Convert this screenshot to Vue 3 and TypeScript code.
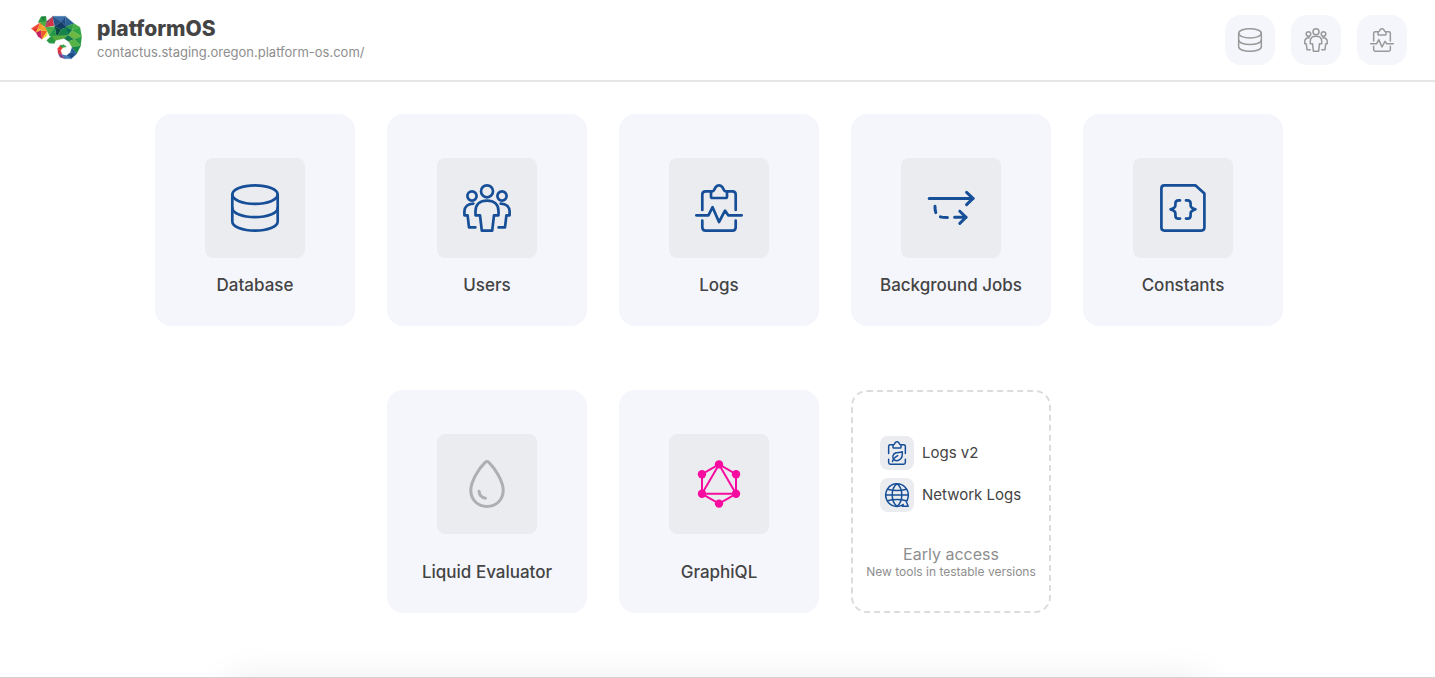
<script setup lang="ts">
interface Shape {
  d: string
}

interface Tool {
  id: string
  label: string
  tone: 'blue' | 'grey' | 'pink'
}

const icons: Record<string, Shape[]> = {
  database: [
    { d: 'M1.3 10.6C1.3 5.4 11.4 1.4 24 1.4S46.7 5.4 46.7 10.6 36.6 19.8 24 19.8 1.3 15.8 1.3 10.6Z' },
    { d: 'M1.3 10.6V37.4C1.3 42.6 11.4 46.6 24 46.6S46.7 42.6 46.7 37.4V10.6' },
    { d: 'M1.3 24C1.3 29.2 11.4 33.2 24 33.2S46.7 29.2 46.7 24' },
  ],
  users: [
    { d: 'M18 7.3a6 6 0 1 0 12 0a6 6 0 1 0-12 0Z' },
    { d: 'M4.4 12a4.6 4.6 0 1 0 9.2 0a4.6 4.6 0 1 0-9.2 0Z' },
    { d: 'M34.4 12a4.6 4.6 0 1 0 9.2 0a4.6 4.6 0 1 0-9.2 0Z' },
    { d: 'M12.5 31.3V27C12.5 20.5 17 16.6 24 16.6S35.5 20.5 35.5 27V31.3H31L29.2 46.6H18.8L17 31.3Z' },
    { d: 'M10.3 19.6C5 19.8 1.4 22.8 1.4 27.6V31.3H4.6L6 43.4H12.4' },
    { d: 'M37.7 19.6C43 19.8 46.6 22.8 46.6 27.6V31.3H43.4L42 43.4H35.6' },
  ],
  logs: [
    { d: 'M16 7.4H17.2C19.2 7.4 19.4 4.4 21 2.8C22.4 1 25.6 1 27 2.8C28.6 4.4 28.8 7.4 30.8 7.4H32V12.4Q32 14 30.4 14H17.6Q16 14 16 12.4Z' },
    { d: 'M16 7.4H10.6Q7.3 7.4 7.3 10.6V26M32 7.4H37.4Q40.7 7.4 40.7 10.6V26' },
    { d: 'M7.3 36.6V43.2Q7.3 46.6 10.6 46.6H37.4Q40.7 46.6 40.7 43.2V36.6' },
    { d: 'M1.3 31.3H13.4L17.6 23.2L24 38L30 26.6L33.2 31.3H46.7' },
  ],
  jobs: [
    { d: 'M2.2 14.4H46' },
    { d: 'M39.6 8.4L46 14.4L39.6 20.6' },
    { d: 'M8 22.2Q7.9 26 8.8 28.6M13.4 32.8Q15.4 33.5 20.4 33.5M27.6 33.3H39' },
    { d: 'M32.8 27.2L39 33.3L32.8 39.4' },
  ],
  constants: [
    { d: 'M5.4 1.4H36.6L45.4 9.6V43.6Q45.4 46.6 42.4 46.6H5.4Q2.4 46.6 2.4 43.6V4.4Q2.4 1.4 5.4 1.4Z' },
    { d: 'M21 16.4H19.6Q16.4 16.4 16.4 19.6V21.6Q16.4 24 11.6 25.4Q16.4 26.8 16.4 29.4V31.4Q16.4 34.6 19.6 34.6H21' },
    { d: 'M27 16.4H28.4Q31.6 16.4 31.6 19.6V21.6Q31.6 24 36.4 25.4Q31.6 26.8 31.6 29.4V31.4Q31.6 34.6 28.4 34.6H27' },
  ],
  liquid: [
    { d: 'M22.4 2.2Q24 .8 25.6 2.2C31 7.4 40.2 20.4 40.2 30.3C40.2 40 33 46.5 24 46.5S7.8 40 7.8 30.3C7.8 20.4 17 7.4 22.4 2.2Z' },
    { d: 'M16 31.2Q16.6 37.4 22.4 38.2' },
  ],
  logsv2: [
    { d: 'M16 7.4H17.2C19.2 7.4 19.4 4.4 21 2.8C22.4 1 25.6 1 27 2.8C28.6 4.4 28.8 7.4 30.8 7.4H32V12.4Q32 14 30.4 14H17.6Q16 14 16 12.4Z' },
    { d: 'M16 7.4H10.6Q7.3 7.4 7.3 10.6V25M32 7.4H37.4Q40.7 7.4 40.7 10.6V25' },
    { d: 'M7.3 36.6V43.2Q7.3 46.6 10.6 46.6H37.4Q40.7 46.6 40.7 43.2V36.6' },
    { d: 'M15 41Q17.4 33.4 25.4 29.4' },
    { d: 'M18.4 37.8C13.4 33 15.4 25.6 22 23.6C26.4 22.2 30 23.4 34.6 21.4C35 26.4 35.2 32.2 31 36C27.2 39.4 22 40 18.4 37.8Z' },
  ],
  network: [
    { d: 'M36.6 43A22.6 22.6 0 1 1 46.4 27.4C46 31 44.6 34.6 42.6 37.4L46.4 46.4H34.4L36.6 43' },
    { d: 'M24 1.4C17.4 6.4 14.4 14.4 14.4 24S17.4 41.6 24 46.6M24 1.4C30.6 6.4 33.6 14.4 33.6 24C33.6 33.6 30.6 41.6 24 46.6' },
    { d: 'M1.4 24H46.6M5 12.4Q24 17.4 43 12.4M5 35.6Q24 30.6 42.6 35.6' },
  ],
}

const shortcuts = [
  { id: 'database', label: 'Database' },
  { id: 'users', label: 'Users' },
  { id: 'logs', label: 'Logs' },
]

const mainTools: Tool[] = [
  { id: 'database', label: 'Database', tone: 'blue' },
  { id: 'users', label: 'Users', tone: 'blue' },
  { id: 'logs', label: 'Logs', tone: 'blue' },
  { id: 'jobs', label: 'Background Jobs', tone: 'blue' },
  { id: 'constants', label: 'Constants', tone: 'blue' },
]

const extraTools: Tool[] = [
  { id: 'liquid', label: 'Liquid Evaluator', tone: 'grey' },
  { id: 'graphiql', label: 'GraphiQL', tone: 'pink' },
]

const earlyTools = [
  { id: 'logsv2', label: 'Logs v2' },
  { id: 'network', label: 'Network Logs' },
]

const facets: { p: string; c: string }[] = [
  { p: '54,54 63,37 78,36 80,52 66,55', c: '#2c9b3f' },
  { p: '63,37 78,36 70,48', c: '#1c7d3b' },
  { p: '34,72 54,70 48,84', c: '#e5322d' },
  { p: '34,72 60,55 54,71', c: '#ee4a3a' },
  { p: '60,55 74,59 63,76 54,71', c: '#f28a2e' },
  { p: '54,71 63,78 48,86', c: '#f7b52c' },
  { p: '48,84 63,78 66,104 54,96', c: '#c51f63' },
  { p: '63,78 82,80 66,104', c: '#ef5a2b' },
  { p: '66,104 82,80 82,94', c: '#f7dc32' },
  { p: '60,55 80,50 76,68', c: '#4fae45' },
  { p: '63,78 60,60 76,68 82,80', c: '#f6a62d' },
  { p: '76,68 98,36 102,64', c: '#cf3345' },
  { p: '98,36 80,50 76,68', c: '#9c3c63' },
  { p: '98,35 136,35 124,52', c: '#3970aa' },
  { p: '98,35 124,52 104,66', c: '#275286' },
  { p: '136,35 138,66 124,52', c: '#214b86' },
  { p: '136,35 162,57 138,66', c: '#2b6296' },
  { p: '124,52 140,68 124,74 104,66', c: '#143d66' },
  { p: '104,66 124,74 110,98', c: '#0b4b42' },
  { p: '76,68 104,66 88,94 82,80', c: '#4caf48' },
  { p: '104,66 110,98 88,94', c: '#229848' },
  { p: '140,68 144,92 110,98 124,74', c: '#15834a' },
  { p: '138,66 162,57 156,78', c: '#2f9c48' },
  { p: '162,57 180,68 156,78', c: '#45ac44' },
  { p: '138,66 156,78 144,92', c: '#087052' },
  { p: '156,78 180,68 185,96', c: '#2fa543' },
  { p: '156,78 185,96 162,104 144,92', c: '#6cb840' },
  { p: '80,108 94,94 112,96 103,117 88,116', c: '#2b9844' },
  { p: '94,94 144,92 132,102 106,108', c: '#57ab3e' },
  { p: '144,92 162,104 146,111 132,102', c: '#14794c' },
  { p: '162,104 185,96 182,124', c: '#2a9b44' },
  { p: '146,111 162,104 182,124 156,128', c: '#57b345' },
  { p: '156,128 182,124 170,148', c: '#168747' },
  { p: '156,128 170,148 151,144', c: '#285f9d' },
  { p: '151,144 170,148 154,163 140,153', c: '#1c4e89' },
  { p: '140,153 154,163 134,163 126,150', c: '#3f79b7' },
  { p: '126,150 134,163 120,158 114,146', c: '#7b3f8c' },
  { p: '114,146 113,132 122,138 126,150', c: '#d53a43' },
  { p: '113,132 122,121 129,128 122,138', c: '#ec3a32' },
  { p: '119,124 130,120 140,127 127,130', c: '#37a34a' },
]
</script>

<template>
  <div class="page">
    <header class="top">
      <a class="brand" href="#">
        <svg class="logo" viewBox="33 33 156 135" aria-hidden="true">
          <polygon v-for="(f, i) in facets" :key="i" :points="f.p" :fill="f.c" :stroke="f.c" stroke-width="0.6" />
        </svg>
        <span class="brand-text">
          <span class="wordmark">platformOS</span>
          <span class="host">contactus.staging.oregon.platform-os.com/</span>
        </span>
      </a>
      <nav class="shortcuts" aria-label="Shortcuts">
        <a v-for="s in shortcuts" :key="s.id" class="shortcut" href="#" :aria-label="s.label">
          <svg class="icon small" viewBox="0 0 48 48" aria-hidden="true">
            <path v-for="(shape, i) in icons[s.id]" :key="i" :d="shape.d" />
          </svg>
        </a>
      </nav>
    </header>

    <main class="tools">
      <ul class="row">
        <li v-for="t in mainTools" :key="t.id">
          <a class="card" href="#">
            <span class="tile" :class="t.tone">
              <svg class="icon" :class="{ bold: t.id === 'jobs' }" viewBox="0 0 48 48" aria-hidden="true">
                <path v-for="(shape, i) in icons[t.id]" :key="i" :d="shape.d" />
              </svg>
            </span>
            <span class="label">{{ t.label }}</span>
          </a>
        </li>
      </ul>

      <ul class="row">
        <li v-for="t in extraTools" :key="t.id">
          <a class="card" href="#">
            <span class="tile" :class="t.tone">
              <svg v-if="t.id === 'graphiql'" class="icon graph" viewBox="0 0 48 48" aria-hidden="true">
                <path d="M24 4.4L41 14.2V33.8L24 43.6L7 33.8V14.2Z" />
                <path d="M24 4.4L41 33.8H7Z" />
                <g class="nodes">
                  <circle cx="24" cy="4.4" r="4.2" />
                  <circle cx="41" cy="14.2" r="4.2" />
                  <circle cx="41" cy="33.8" r="4.2" />
                  <circle cx="24" cy="43.6" r="4.2" />
                  <circle cx="7" cy="33.8" r="4.2" />
                  <circle cx="7" cy="14.2" r="4.2" />
                </g>
              </svg>
              <svg v-else class="icon bold" viewBox="0 0 48 48" aria-hidden="true">
                <path v-for="(shape, i) in icons[t.id]" :key="i" :d="shape.d" />
              </svg>
            </span>
            <span class="label">{{ t.label }}</span>
          </a>
        </li>
        <li>
          <section class="early">
            <ul class="early-list">
              <li v-for="t in earlyTools" :key="t.id">
                <a class="early-link" href="#">
                  <span class="mini">
                    <svg class="icon small" viewBox="0 0 48 48" aria-hidden="true">
                      <path v-for="(shape, i) in icons[t.id]" :key="i" :d="shape.d" />
                    </svg>
                  </span>
                  {{ t.label }}
                </a>
              </li>
            </ul>
            <h2 class="early-title">Early access</h2>
            <p class="early-note">New tools in testable versions</p>
          </section>
        </li>
      </ul>
    </main>

    <footer class="bottom"></footer>
  </div>
</template>

<style>
body {
  background: #fff;
}
</style>

<style scoped>
.page {
  display: flex;
  flex-direction: column;
  min-height: 100vh;
  font-family: Inter, "Liberation Sans", sans-serif;
  color: #444;
}

a {
  color: inherit;
  text-decoration: none;
}

ul {
  list-style: none;
  margin: 0;
  padding: 0;
}

.top {
  display: flex;
  align-items: flex-start;
  justify-content: space-between;
  padding: 15px 28px 15px 31px;
  border-bottom: 2px solid #e5e5e5;
}

.brand {
  display: flex;
  align-items: flex-start;
  gap: 14px;
}

.logo {
  width: 52px;
  height: 46px;
}

.brand-text {
  display: flex;
  flex-direction: column;
}

.wordmark {
  font-size: 21px;
  line-height: 28px;
  font-weight: 800;
}

.host {
  font-size: 13px;
  line-height: 18px;
  color: #8e8e8e;
}

.shortcuts {
  display: flex;
  gap: 16px;
}

.shortcut {
  display: flex;
  align-items: center;
  justify-content: center;
  width: 50px;
  height: 50px;
  border-radius: 16px;
  background: #f5f6fc;
  color: #999;
}

.icon {
  width: 48px;
  height: 48px;
  overflow: visible;
  fill: none;
  stroke: currentColor;
  stroke-width: 2.7;
  stroke-linecap: round;
  stroke-linejoin: round;
}

.icon.small {
  width: 24px;
  height: 24px;
}

.icon.bold,
.icon.small {
  stroke-width: 3;
}

.icon.graph {
  stroke-width: 2;
}

.nodes {
  fill: currentColor;
  stroke: none;
}

.tools {
  display: flex;
  flex: 1;
  flex-direction: column;
  gap: 64px;
  padding: 32px 28px 0 31px;
}

.row {
  display: flex;
  justify-content: center;
  gap: 32px;
}

.row > li {
  display: flex;
  width: 200px;
}

.card {
  display: flex;
  flex: 1;
  flex-direction: column;
  align-items: center;
  justify-content: space-between;
  gap: 16px;
  padding: 44px 0 30px;
  border-radius: 16px;
  background: #f5f6fc;
}

.tile {
  display: flex;
  align-items: center;
  justify-content: center;
  width: 100px;
  height: 100px;
  border-radius: 8px;
  background: #ebecf0;
}

.blue {
  color: #164f97;
}

.grey {
  color: #aeafb1;
}

.pink {
  color: #f60da0;
}

.label {
  font-size: 17px;
  line-height: 22px;
  font-weight: 500;
}

.early {
  box-sizing: border-box;
  width: 100%;
  padding: 44px 0 31px;
  border: 2px dashed #dcdcdc;
  border-radius: 16px;
  text-align: center;
}

.early-list {
  display: flex;
  flex-direction: column;
  gap: 8px;
  padding: 0 27px;
}

.early-link {
  display: flex;
  align-items: center;
  gap: 8px;
  font-size: 15px;
  line-height: 20px;
  white-space: nowrap;
}

.mini {
  display: flex;
  flex: none;
  align-items: center;
  justify-content: center;
  width: 34px;
  height: 34px;
  border-radius: 8px;
  background: #ebecf0;
  color: #164f97;
}

.early-title {
  margin: 32px 0 0;
  font-size: 16px;
  line-height: 20px;
  font-weight: 400;
  color: #8e8e8e;
}

.early-note {
  margin: 0;
  font-size: 12px;
  line-height: 16px;
  color: #8e8e8e;
}

.bottom {
  position: relative;
  height: 36px;
  overflow: hidden;
  border-bottom: 1px solid #d2d2d2;
}

.bottom::after {
  content: "";
  position: absolute;
  top: 100%;
  left: 16%;
  right: 16%;
  height: 40px;
  box-shadow: 0 4px 40px rgba(0, 0, 0, 0.09);
}
</style>
